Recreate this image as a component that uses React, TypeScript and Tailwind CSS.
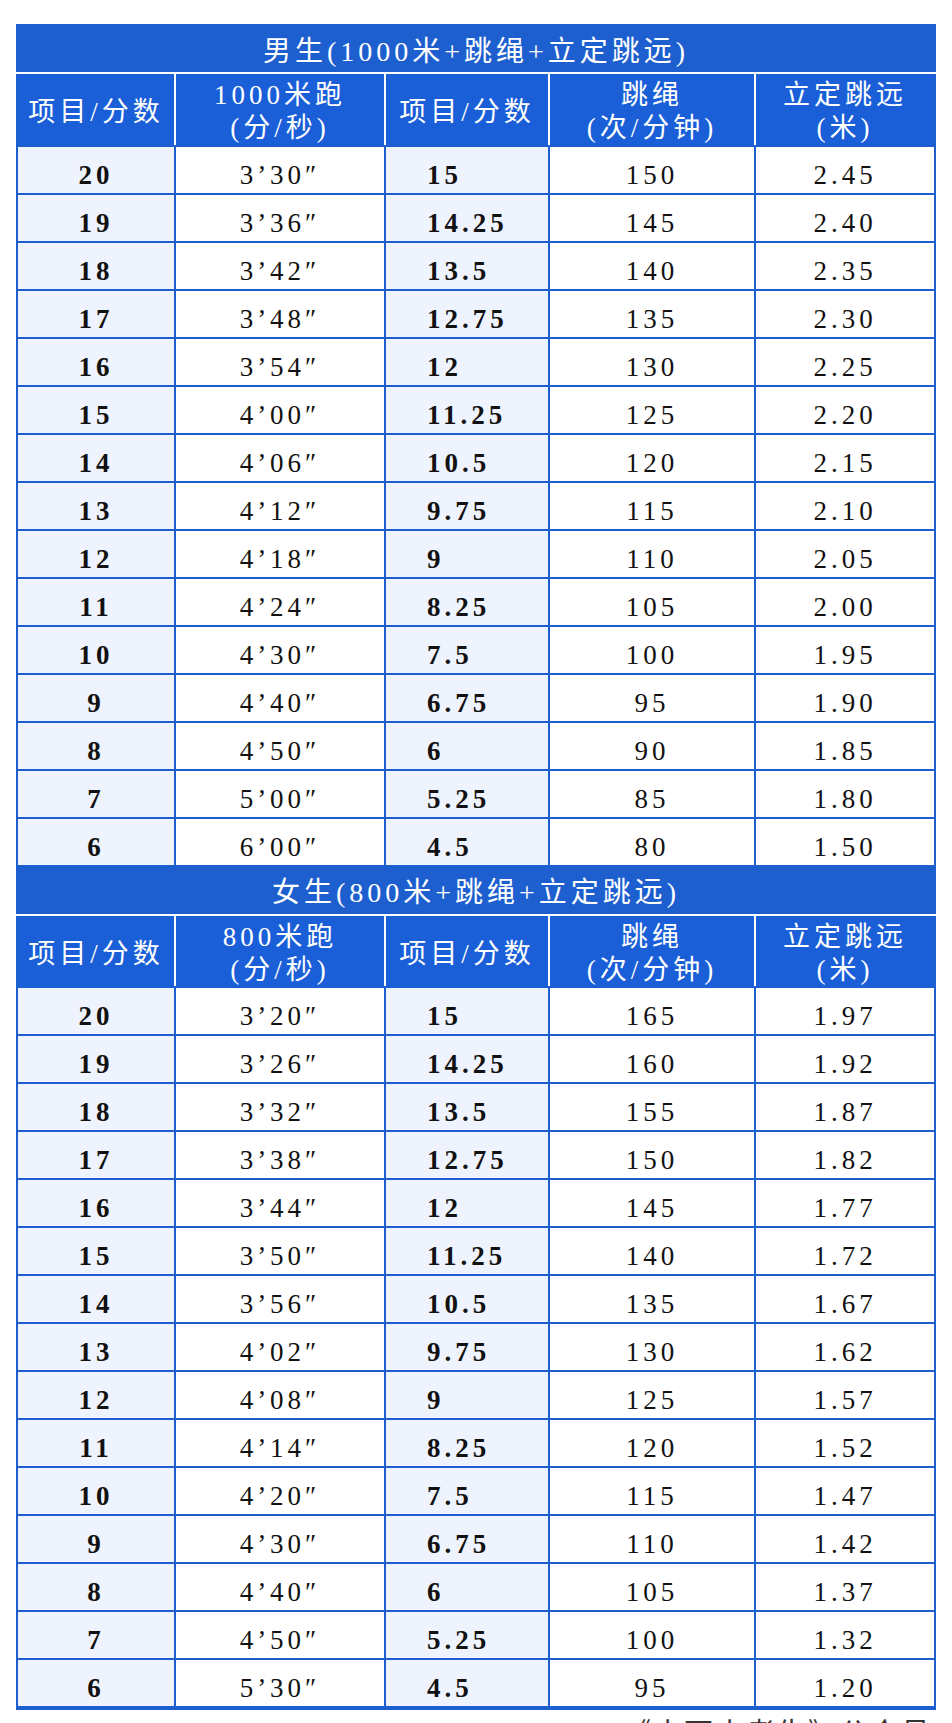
const FONT = "font-['Liberation_Serif','Noto_Sans_CJK_SC',serif]";

type Row = [string, string, string, string, string];

const maleRows: Row[] = [
  ["20", "3’30″", "15", "150", "2.45"],
  ["19", "3’36″", "14.25", "145", "2.40"],
  ["18", "3’42″", "13.5", "140", "2.35"],
  ["17", "3’48″", "12.75", "135", "2.30"],
  ["16", "3’54″", "12", "130", "2.25"],
  ["15", "4’00″", "11.25", "125", "2.20"],
  ["14", "4’06″", "10.5", "120", "2.15"],
  ["13", "4’12″", "9.75", "115", "2.10"],
  ["12", "4’18″", "9", "110", "2.05"],
  ["11", "4’24″", "8.25", "105", "2.00"],
  ["10", "4’30″", "7.5", "100", "1.95"],
  ["9", "4’40″", "6.75", "95", "1.90"],
  ["8", "4’50″", "6", "90", "1.85"],
  ["7", "5’00″", "5.25", "85", "1.80"],
  ["6", "6’00″", "4.5", "80", "1.50"],
];

const femaleRows: Row[] = [
  ["20", "3’20″", "15", "165", "1.97"],
  ["19", "3’26″", "14.25", "160", "1.92"],
  ["18", "3’32″", "13.5", "155", "1.87"],
  ["17", "3’38″", "12.75", "150", "1.82"],
  ["16", "3’44″", "12", "145", "1.77"],
  ["15", "3’50″", "11.25", "140", "1.72"],
  ["14", "3’56″", "10.5", "135", "1.67"],
  ["13", "4’02″", "9.75", "130", "1.62"],
  ["12", "4’08″", "9", "125", "1.57"],
  ["11", "4’14″", "8.25", "120", "1.52"],
  ["10", "4’20″", "7.5", "115", "1.47"],
  ["9", "4’30″", "6.75", "110", "1.42"],
  ["8", "4’40″", "6", "105", "1.37"],
  ["7", "4’50″", "5.25", "100", "1.32"],
  ["6", "5’30″", "4.5", "95", "1.20"],
];

const GRID = "grid grid-cols-[156px_208px_162px_204px_178px] gap-x-[2px]";

function HeaderCell({ lines }: { lines: string[] }) {
  return (
    <div className="flex flex-col items-center justify-center bg-[#1a5fd8] pt-[5px] text-[27px] leading-[33px] tracking-[4px] text-white">
      {lines.map((line) => (
        <span key={line}>{line}</span>
      ))}
    </div>
  );
}

function Section({
  title,
  runLabel,
  rows,
  titleHeight,
  headerHeight,
}: {
  title: string;
  runLabel: string;
  rows: Row[];
  titleHeight: string;
  headerHeight: string;
}) {
  return (
    <>
      <div
        className={`flex items-center justify-center ${titleHeight} pt-[7px] text-[28px] leading-[34px] tracking-[4px] text-white`}
      >
        {title}
      </div>
      <div className="h-[2px] bg-white" />
      <div className="px-[2px]">
        <div className={`${GRID} ${headerHeight} bg-white`}>
          <HeaderCell lines={["项目/分数"]} />
          <HeaderCell lines={[runLabel, "(分/秒)"]} />
          <HeaderCell lines={["项目/分数"]} />
          <HeaderCell lines={["跳绳", "(次/分钟)"]} />
          <HeaderCell lines={["立定跳远", "(米)"]} />
        </div>
      </div>
      <div className="flex flex-col gap-y-[2px] px-[2px] pt-[2px]">
        {rows.map((row) => (
          <div
            key={row[0]}
            className={`${GRID} h-[46px] text-[27px] leading-[30px] tracking-[4px] text-[#111]`}
          >
            <div className="flex items-center justify-center bg-[#eef3fd] pt-[10px] font-bold">
              {row[0]}
            </div>
            <div className="flex items-center justify-center bg-white pt-[10px]">
              {row[1]}
            </div>
            <div className="flex items-center bg-[#eef3fd] pl-[41px] pt-[10px] font-bold">
              {row[2]}
            </div>
            <div className="flex items-center justify-center bg-white pt-[10px]">
              {row[3]}
            </div>
            <div className="flex items-center justify-center bg-white pt-[10px]">
              {row[4]}
            </div>
          </div>
        ))}
      </div>
    </>
  );
}

export default function App() {
  return (
    <div className={`min-h-screen w-[952px] bg-white px-4 pt-6 ${FONT}`}>
      <div className="w-[920px] bg-[#1e5fcf] pb-[4px]">
        <Section
          title="男生(1000米+跳绳+立定跳远)"
          runLabel="1000米跑"
          rows={maleRows}
          titleHeight="h-[48px]"
          headerHeight="h-[71px]"
        />
        <Section
          title="女生(800米+跳绳+立定跳远)"
          runLabel="800米跑"
          rows={femaleRows}
          titleHeight="h-[49px]"
          headerHeight="h-[70px]"
        />
      </div>
      <div className="flex justify-end pr-[4px] pt-[3px] text-[29px] tracking-[2px] text-[#333]">
        《小西小考生》公众号
      </div>
    </div>
  );
}
